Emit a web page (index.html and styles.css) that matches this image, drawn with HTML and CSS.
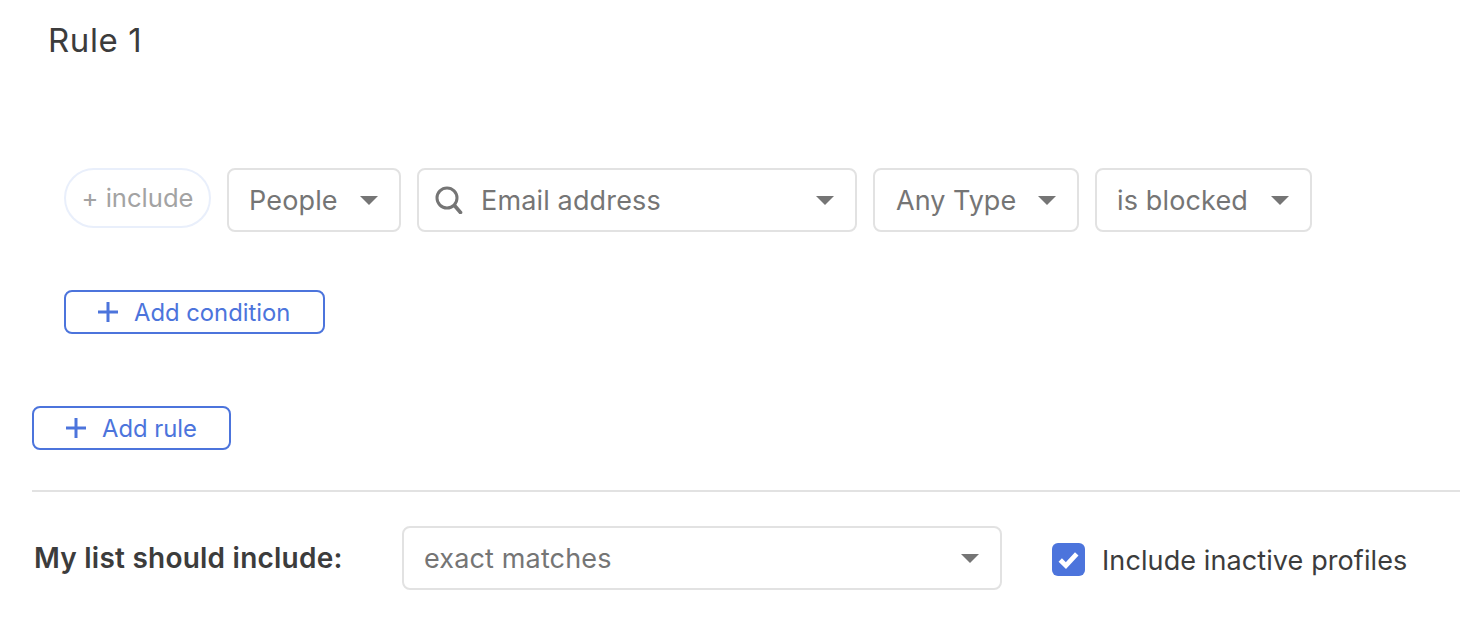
FILE: index.html
```html
<!DOCTYPE html>
<html lang="en">
<head>
<meta charset="utf-8">
<title>Rule builder</title>
<link rel="stylesheet" href="styles.css">
</head>
<body>
<main class="page">
  <h2 class="rule-title">Rule 1</h2>
  <div class="rule">
    <div class="conditions">
      <div class="include-pill">+ include</div>
      <div class="select w-people"><span>People</span><i class="caret"></i></div>
      <div class="select w-email">
        <svg class="search" viewBox="0 0 28 28" fill="none" stroke="#757575" stroke-width="3"><circle cx="12" cy="12" r="10"/><path d="M19.5 19.5l6 7" stroke-width="3.6" stroke-linecap="round"/></svg>
        <span class="grow">Email address</span><i class="caret"></i>
      </div>
      <div class="select w-type"><span>Any Type</span><i class="caret"></i></div>
      <div class="select w-block"><span>is blocked</span><i class="caret"></i></div>
    </div>
    <button class="add w-cond"><svg class="plus" viewBox="0 0 20 20"><path d="M10 0v20M0 10h20"/></svg>Add condition</button>
  </div>
  <button class="add w-rule"><svg class="plus" viewBox="0 0 20 20"><path d="M10 0v20M0 10h20"/></svg>Add rule</button>
  <hr class="divider">
  <div class="footer">
    <strong class="footer-label">My list should include:</strong>
    <div class="select w-match"><span class="grow">exact matches</span><i class="caret"></i></div>
    <label class="check">
      <span class="box"><svg viewBox="0 0 32 32" fill="none" stroke="#fff" stroke-width="4.6"><path d="M8 16.5l5.5 5.5 10.5-11.5"/></svg></span>
      Include inactive profiles
    </label>
  </div>
</main>
</body>
</html>
```
FILE: styles.css
```css
* { box-sizing: border-box; }
html, body { margin: 0; height: 100%; background: #fff; overflow: hidden; }
body { font-family: Inter, "Liberation Sans", sans-serif; color: #3c3c3c; }
.page { padding: 0 0 0 32px; }
.rule-title { margin: 0 0 0 16px; padding-top: 20px; height: 168px; font-size: 33px; line-height: 40px; font-weight: 400; letter-spacing: 0.6px; color: #3c3c3c; }
.rule { padding-left: 32px; }
.conditions { display: flex; gap: 16px; align-items: flex-start; }
.include-pill { width: 147px; height: 60px; padding-bottom: 2px; border: 2px solid #e9effb; border-radius: 30px; display: flex; align-items: center; justify-content: center; font-size: 25.6px; color: #a3a3a3; }
.select { height: 64px; border: 2px solid #e2e2e2; border-radius: 8px; background: #fff; display: flex; align-items: center; font-size: 27px; letter-spacing: 0.15px; color: #757575; padding: 0 21px 0 20px; justify-content: space-between; }
.grow { flex: 1; }
.w-people { width: 174px; }
.w-email { width: 440px; padding-left: 16px; padding-right: 21px; }
.w-type { width: 206px; padding-left: 21px; letter-spacing: 0; }
.w-block { width: 217px; }
.w-match { width: 600px; margin: 0; }
.search { width: 28px; height: 28px; margin-right: 18px; flex: none; }
.caret { width: 0; height: 0; border-left: 9px solid transparent; border-right: 9px solid transparent; border-top: 9px solid #757575; flex: none; }
.add { display: flex; align-items: center; height: 44px; border: 2px solid #4c74dc; border-radius: 8px; background: #fff; color: #4c74dc; font: 400 23.8px Inter, "Liberation Sans", sans-serif; padding: 0 0 0 32px; }
.plus { width: 20px; height: 20px; margin-right: 16px; fill: none; stroke: #4c74dc; stroke-width: 3; flex: none; }
.w-cond { width: 261px; margin-top: 58px; }
.w-rule { width: 199px; margin-top: 72px; }
.divider { margin: 40px 0 0; border: 0; height: 2px; background: #e2e2e2; }
.footer { display: flex; align-items: center; margin-top: 34px; }
.footer-label { width: 370px; padding-left: 2px; font-size: 28px; letter-spacing: 0.23px; font-weight: 600; color: #3c3c3c; }
.check { display: flex; align-items: center; margin-left: 50px; padding-top: 4px; font-size: 27px; letter-spacing: 0.1px; color: #3c3c3c; }
.box { width: 33px; height: 33px; margin: -2px 17px 0 0; border-radius: 6px; background: #4c74dc; display: flex; }
.box svg { width: 33px; height: 33px; }
```
